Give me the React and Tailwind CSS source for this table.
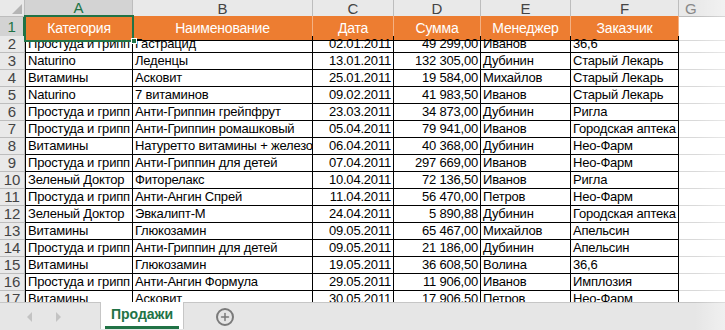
import { Plus } from 'lucide-react'

const cols = ['A', 'B', 'C', 'D', 'E', 'F']
const heads = ['Категория', 'Наименование', 'Дата', 'Сумма', 'Менеджер', 'Заказчик']

const rows = [
  ['Простуда и грипп', 'Гастрацид', '02.01.2011', '49 299,00', 'Иванов', '36,6'],
  ['Naturino', 'Леденцы', '13.01.2011', '132 305,00', 'Дубинин', 'Старый Лекарь'],
  ['Витамины', 'Асковит', '25.01.2011', '19 584,00', 'Михайлов', 'Старый Лекарь'],
  ['Naturino', '7 витаминов', '09.02.2011', '41 983,50', 'Иванов', 'Старый Лекарь'],
  ['Простуда и грипп', 'Анти-Гриппин грейпфрут', '23.03.2011', '34 873,00', 'Дубинин', 'Ригла'],
  ['Простуда и грипп', 'Анти-Гриппин ромашковый', '05.04.2011', '79 941,00', 'Иванов', 'Городская аптека'],
  ['Витамины', 'Натуретто витамины + железо', '06.04.2011', '40 368,00', 'Дубинин', 'Нео-Фарм'],
  ['Простуда и грипп', 'Анти-Гриппин для детей', '07.04.2011', '297 669,00', 'Иванов', 'Нео-Фарм'],
  ['Зеленый Доктор', 'Фиторелакс', '10.04.2011', '72 136,50', 'Иванов', 'Ригла'],
  ['Простуда и грипп', 'Анти-Ангин Спрей', '11.04.2011', '56 470,00', 'Петров', 'Нео-Фарм'],
  ['Зеленый Доктор', 'Эвкалипт-М', '24.04.2011', '5 890,88', 'Дубинин', 'Городская аптека'],
  ['Витамины', 'Глюкозамин', '09.05.2011', '65 467,00', 'Михайлов', 'Апельсин'],
  ['Простуда и грипп', 'Анти-Гриппин для детей', '09.05.2011', '21 186,00', 'Дубинин', 'Апельсин'],
  ['Витамины', 'Глюкозамин', '19.05.2011', '36 608,50', 'Волина', '36,6'],
  ['Простуда и грипп', 'Анти-Ангин Формула', '29.05.2011', '11 906,00', 'Иванов', 'Имплозия'],
  ['Витамины', 'Асковит', '30.05.2011', '17 906,50', 'Петров', 'Нео-Фарм'],
]

const grid = 'grid grid-cols-[25px_108px_180px_81px_87px_90px_108px_1fr]'

export default function App() {
  return (
    <div
      className="w-[725px] h-[330px] overflow-hidden bg-white flex flex-col relative"
      style={{ fontFamily: '"Liberation Sans", Arial, sans-serif' }}
    >
      <div className="flex-1 overflow-hidden">
        {/* column letters */}
        <div className={`${grid} h-[16px] bg-[#e9e9e9] text-[15px] text-[#444] leading-none`}>
          <div className="border-r border-b border-[#bdbdbd] relative">
            <div className="absolute right-[2px] bottom-[2px] w-0 h-0 border-l-[10px] border-l-transparent border-b-[10px] border-b-[#b5b5b5]" />
          </div>
          {cols.map((c, i) => (
            <div
              key={c}
              className={`flex items-center justify-center border-r border-[#bdbdbd] ${
                i === 0 ? 'bg-[#d3d3d3] text-[#217346] border-b-2 border-b-[#217346]' : 'border-b'
              }`}
            >
              {c}
            </div>
          ))}
          <div className="flex items-center pl-[6px] border-b border-[#bdbdbd] text-[#888]">G</div>
        </div>

        {/* header row */}
        <div className={`${grid} h-[20px] text-[14px] tracking-[-0.2px]`}>
          <div className="bg-[#d3d3d3] text-[#217346] border-r-2 border-r-[#217346] border-b border-b-[#bdbdbd] flex items-end justify-center pb-[1px] text-[15px]">
            1
          </div>
          {heads.map((h, i) => (
            <div
              key={h}
              className={`bg-[#ed7d31] text-white flex items-end justify-center pb-[1px] border-b border-black ${
                i === 0 ? 'outline-2 outline-[#217346] -outline-offset-1 relative z-10' : 'border-r border-r-white/40'
              }`}
            >
              {h}
              {i === 0 && (
                <div className="absolute -right-[4px] -bottom-[4px] w-[6px] h-[6px] bg-[#217346] border border-white" />
              )}
            </div>
          ))}
          <div className="border-b border-[#d9d9d9]" />
        </div>

        {rows.map((r, ri) => (
          <div key={ri} className={`${grid} h-[17px] text-[13px] tracking-[-0.2px] leading-[16px] text-black`}>
            <div className="bg-[#e9e9e9] text-[#444] border-r border-b border-[#bdbdbd] flex items-end justify-center text-[15px] tracking-normal">
              {ri + 2}
            </div>
            {r.map((v, ci) => (
              <div
                key={ci}
                className={`border-r border-b border-black whitespace-nowrap overflow-hidden flex items-end px-[2px] ${
                  ci === 0 ? 'border-l' : ''
                } ${ci === 2 || ci === 3 ? 'justify-end' : ''}`}
              >
                {v}
              </div>
            ))}
            <div className="border-b border-[#d9d9d9]" />
          </div>
        ))}
      </div>

      {/* sheet tabs */}
      <div className="h-[28px] shrink-0 bg-[#e6e6e6] border-t border-[#c6c6c6] flex items-start">
        <div className="w-[100px] h-full flex items-center pl-[27px] gap-[24px]">
          <div className="w-0 h-0 border-y-[5px] border-y-transparent border-r-[5px] border-r-[#c3c3c3]" />
          <div className="w-0 h-0 border-y-[5px] border-y-transparent border-l-[5px] border-l-[#c3c3c3]" />
        </div>
        <div className="w-[84px] h-[27px] -mt-px bg-white border-x border-[#c6c6c6] flex flex-col">
          <div className="flex-1 flex items-center justify-center text-[#217346] font-bold text-[14px]">Продажи</div>
          <div className="h-[3px] bg-[#217346] mx-[4px]" />
        </div>
        <div className="ml-[32px] h-full flex items-center">
          <div className="w-[18px] h-[18px] rounded-full border-2 border-[#7a7a7a] flex items-center justify-center">
            <Plus className="w-[12px] h-[12px] text-[#7a7a7a]" strokeWidth={3} />
          </div>
        </div>
      </div>

      <div className="absolute right-0 top-0 bottom-0 w-[30px] bg-gradient-to-r from-transparent to-white/40 pointer-events-none" />
    </div>
  )
}
